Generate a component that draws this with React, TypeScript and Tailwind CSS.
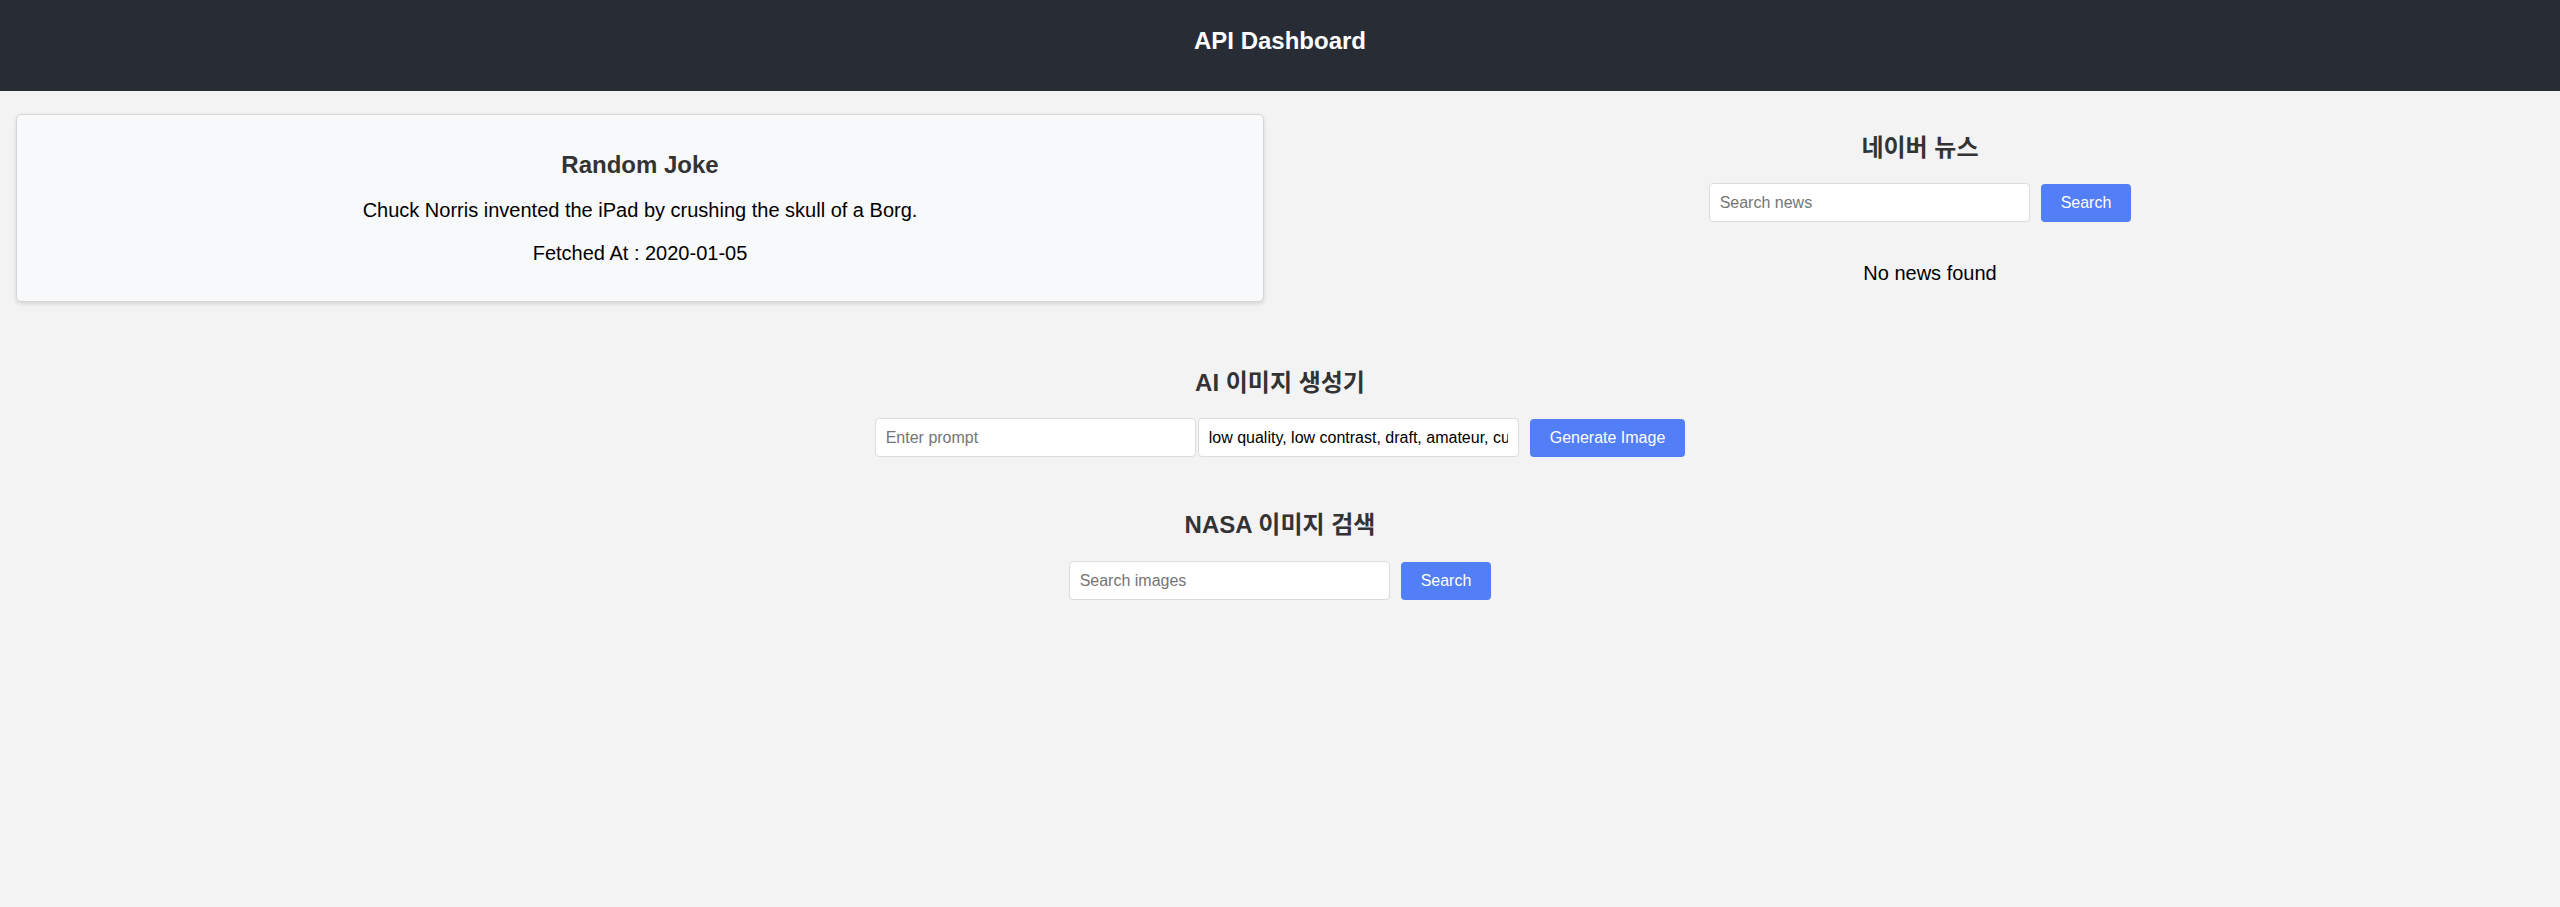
import { useState } from "react"

const font = "font-['Liberation_Sans','Noto_Sans_CJK_KR',sans-serif]"

function SearchRow({ placeholder, label }: { placeholder: string; label: string }) {
  const [value, setValue] = useState("")
  return (
    <div className="flex items-center justify-center">
      <input
        value={value}
        onChange={(e) => setValue(e.target.value)}
        placeholder={placeholder}
        className="w-[321px] h-[39px] px-[10px] bg-white border border-[#dcdcdc] rounded-[4px] text-[16px] text-black placeholder:text-[#757575] outline-none"
      />
      <button className="ml-[11px] h-[38px] px-5 bg-[#527ef6] text-white text-[16px] rounded-[4px]">
        {label}
      </button>
    </div>
  )
}

export default function App() {
  const [prompt, setPrompt] = useState("")
  const [negative, setNegative] = useState(
    "low quality, low contrast, draft, amateur, cut off, cropped, frame, ugly"
  )

  return (
    <div className={`min-h-screen bg-[#f3f3f3] ${font}`}>
      {/* Header */}
      <header className="h-[91px] bg-[#282c34] pt-[27px]">
        <h1 className="text-center text-[24px] font-bold text-white leading-[28px]">API Dashboard</h1>
      </header>

      {/* Top grid */}
      <div className="grid grid-cols-2 gap-8 px-4 pt-[23px] items-start">
        {/* Joke card */}
        <div className="bg-[#f8f9fa] border border-[#d6d6d6] rounded-[5px] shadow-[0_2px_4px_rgba(0,0,0,0.12)] pt-[36px] pb-[36px] flex flex-col items-center gap-5">
          <h2 className="text-[24px] font-bold text-[#333] leading-[28px]">Random Joke</h2>
          <p className="text-[20px] text-black leading-[23px]">
            Chuck Norris invented the iPad by crushing the skull of a Borg.
          </p>
          <p className="text-[20px] text-black leading-[23px]">Fetched At : 2020-01-05</p>
        </div>

        {/* News */}
        <div className="pt-[20px] flex flex-col items-center">
          <h2 className="text-[24px] font-bold text-[#333] leading-[28px]">네이버 뉴스</h2>
          <div className="mt-[21px]">
            <SearchRow placeholder="Search news" label="Search" />
          </div>
          <p className="mt-[40px] pl-5 text-[20px] text-black leading-[23px]">No news found</p>
        </div>
      </div>

      {/* AI image generator */}
      <section className="mt-[67px] flex flex-col items-center">
        <h2 className="text-[24px] font-bold text-[#333] leading-[28px]">AI 이미지 생성기</h2>
        <div className="mt-[21px] flex items-center">
          <input
            value={prompt}
            onChange={(e) => setPrompt(e.target.value)}
            placeholder="Enter prompt"
            className="w-[321px] h-[39px] px-[10px] bg-white border border-[#dcdcdc] rounded-[4px] text-[16px] text-black placeholder:text-[#757575] outline-none"
          />
          <input
            value={negative}
            onChange={(e) => setNegative(e.target.value)}
            className="ml-[2px] w-[321px] h-[39px] px-[10px] bg-white border border-[#dcdcdc] rounded-[4px] text-[16px] text-black outline-none"
          />
          <button className="ml-[11px] h-[38px] px-5 bg-[#527ef6] text-white text-[16px] rounded-[4px]">
            Generate Image
          </button>
        </div>
      </section>

      {/* NASA */}
      <section className="mt-[54px] flex flex-col items-center">
        <h2 className="text-[24px] font-bold text-[#333] leading-[28px]">NASA 이미지 검색</h2>
        <div className="mt-[22px]">
          <SearchRow placeholder="Search images" label="Search" />
        </div>
      </section>
    </div>
  )
}
